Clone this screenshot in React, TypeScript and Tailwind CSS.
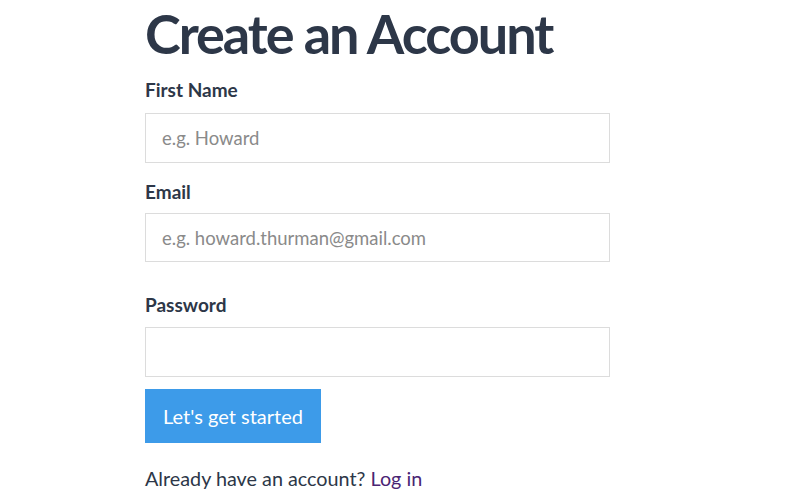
import React from "react";

export default function App() {
  const font = { fontFamily: '"Lato", "Noto Sans", sans-serif' };
  return (
    <div className="w-[799px] h-[500px] overflow-hidden bg-white" style={font}>
      <div className="pl-[145px] flex flex-col items-start">
        <h1 className="mt-[2px] text-[54px] leading-[64px] font-bold text-[#2d3748] tracking-[-2px]">
          Create an Account
        </h1>
        <label className="mt-[12px] block text-[19px] leading-[24px] font-bold text-[#2d3748]">
          First Name
        </label>
        <input
          type="text"
          placeholder="e.g. Howard"
          className="mt-[11px] h-[50px] w-[465px] border border-[#dcdcdc] px-4 text-[18.5px] text-[#2d3748] placeholder:text-[#8a8a8a] outline-none"
        />
        <label className="mt-[17px] block text-[19px] leading-[24px] font-bold text-[#2d3748]">
          Email
        </label>
        <input
          type="email"
          placeholder="e.g. howard.thurman@gmail.com"
          className="mt-[9px] h-[49px] w-[465px] border border-[#dcdcdc] px-4 text-[18.5px] text-[#2d3748] placeholder:text-[#8a8a8a] outline-none"
        />
        <label className="mt-[31px] block text-[19px] leading-[24px] font-bold text-[#2d3748]">
          Password
        </label>
        <input
          type="password"
          className="mt-[10px] h-[50px] w-[465px] border border-[#dcdcdc] px-4 text-[18px] text-[#2d3748] outline-none"
        />
        <button className="mt-[12px] h-[54px] w-[176px] bg-[#3d9be9] text-white text-[20px]">
          Let's get started
        </button>
        <p className="mt-[23px] text-[19.8px] leading-[24px] text-[#2d3748]">
          Already have an account? <a href="#" className="text-[#4a2574]">Log in</a>
        </p>
      </div>
    </div>
  );
}
